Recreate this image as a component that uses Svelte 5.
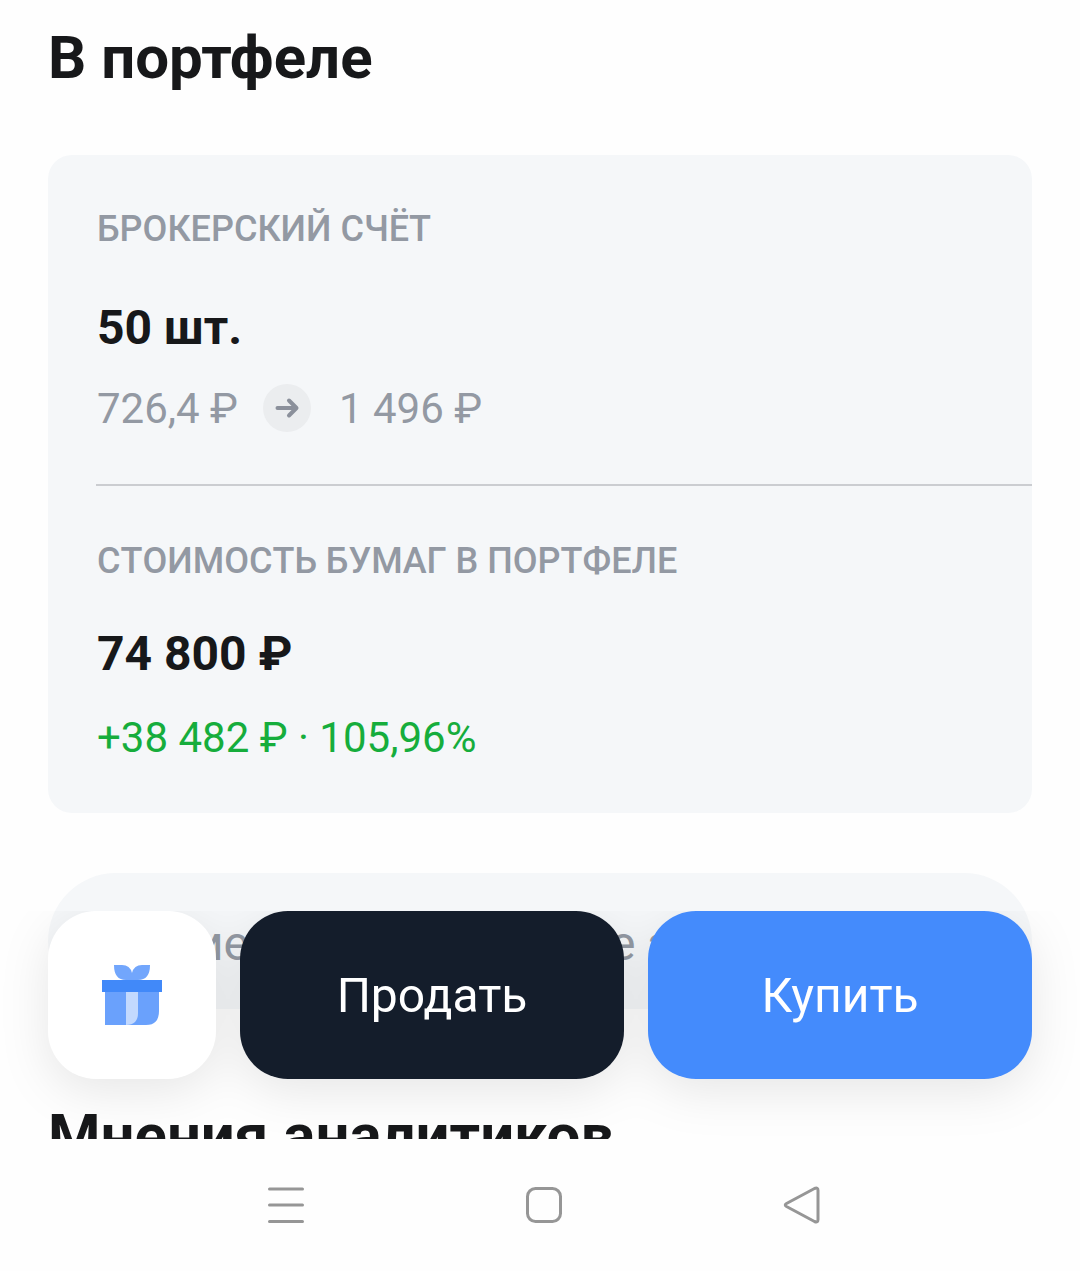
<script>
  const nav = ['Меню', 'Домой', 'Назад'];
</script>

<div class="screen">
  <main>
    <h1>В портфеле</h1>
    <div class="card">
      <section class="account">
        <h2>БРОКЕРСКИЙ СЧЁТ</h2>
        <p class="value">50 шт.</p>
        <p class="price">
          <span>726,4 ₽</span>
          <svg class="arrow" viewBox="0 0 48 48" aria-hidden="true"><circle cx="24" cy="24" r="24" fill="#ebedef" /><path d="M14.500 24H33M26 16.500L33.500 24L26 31.500" fill="none" stroke="#8b909b" stroke-width="4" stroke-linejoin="round" stroke-linecap="round" /></svg>
          <span>1 496 ₽</span>
        </p>
      </section>
      <section class="total">
        <h2>СТОИМОСТЬ БУМАГ В ПОРТФЕЛЕ</h2>
        <p class="value">74 800 ₽</p>
        <p class="profit">+38 482 ₽ · 105,96%</p>
      </section>
    </div>
    <button class="pill">Изменить обновление заявок снова</button>
    <h1 class="next">Мнения аналитиков</h1>
    <div class="dock">
      <button class="gift" aria-label="Подарить">
        <svg viewBox="0 0 60 62" aria-hidden="true">
          <path d="M12 1H20Q28 1 30 9Q32 1 40 1H48Q48 16 36 16H24Q12 16 12 1Z" fill="#72a6fc" />
          <path d="M3 27H57V47Q57 61 44 61H3Z" fill="#6aa1fc" />
          <path d="M24 27H36V49Q36 61 24 61Z" fill="#c3d9fe" />
          <path d="M0 16H60V28H0Z" fill="#4189f9" />
        </svg>
      </button>
      <button class="sell">Продать</button>
      <button class="buy">Купить</button>
    </div>
  </main>
  <nav>
    {#each nav as label, i}
      <button aria-label={label}>
        <svg viewBox="0 0 40 40" aria-hidden="true">
          {#if i === 0}<path d="M3.500 4H36.500M3.500 20H36.500M3.500 36.500H36.500" />
          {:else if i === 1}<rect x="3.500" y="3.500" width="33" height="33" rx="8" />
          {:else}<path d="M4.500 18.500L32.500 3.500Q36 2 36 5.500V34.500Q36 38 32.500 36.500L4.500 21.500Q2 20 4.500 18.500Z" />{/if}
        </svg>
      </button>
    {/each}
  </nav>
</div>

<style>
  :global(body) { margin: 0; background: #fefefe; }
  .screen { display: flex; flex-direction: column; height: 100vh; font-family: Roboto, sans-serif; color: #17181a; }
  main { position: relative; flex: 1; min-height: 0; overflow: hidden; padding: 0 48px; }
  h1, h2, p { margin: 0; }
  h1 { font-size: 60px; line-height: 72px; padding-top: 22px; font-weight: 700; }
  .card { margin-top: 61px; border-radius: 24px; background: #f5f7f9; padding-left: 48px; font-kerning: none; }
  .account { padding: 52px 0 50px 1px; }
  .total { border-top: 2px solid #cbcdd1; padding: 53px 0 50px 1px; }
  h2 { font-size: 36px; line-height: 44px; font-weight: 500; color: #9399a3; }
  .value { font-size: 48px; line-height: 56px; font-weight: 700; margin-top: 49px; }
  .total .value { margin-top: 43px; }
  .price, .profit { font-size: 42px; line-height: 50px; }
  .price { display: flex; align-items: flex-start; margin-top: 28px; color: #9399a3; }
  .arrow { width: 48px; height: 48px; margin: 0 28px 0 25px; }
  .profit { margin-top: 31px; color: #16ad3c; }
  button { border: 0; margin: 0; padding: 0; font: inherit; }
  .pill { display: block; width: 100%; height: 136px; margin-top: 60px; border-radius: 68px; background: #f5f7f9; color: #9399a3; font-size: 48px; padding-top: 5px; white-space: nowrap; }
  .next { margin-top: 69px; }
  .dock { position: absolute; left: 48px; right: 48px; bottom: 60px; display: grid; grid-template-columns: 168px 1fr 1fr; gap: 24px; filter: drop-shadow(0 12px 24px #00000018); clip-path: inset(0 -48px -60px); }
  .dock button { height: 168px; border-radius: 48px; color: #fff; font-size: 48px; }
  .dock .gift { background: #fff; }
  .gift svg { display: block; width: 60px; height: 62px; margin: 0 auto; }
  .dock .sell { background: #141d2b; }
  .dock .buy { background: #448bfc; }
  nav { display: flex; justify-content: center; gap: 218px; padding: 46px 0 46px 8px; }
  nav button { background: none; height: 40px; }
  nav svg { display: block; width: 40px; height: 40px; fill: none; stroke: #969696; stroke-width: 3; stroke-linejoin: round; stroke-linecap: round; }
</style>
